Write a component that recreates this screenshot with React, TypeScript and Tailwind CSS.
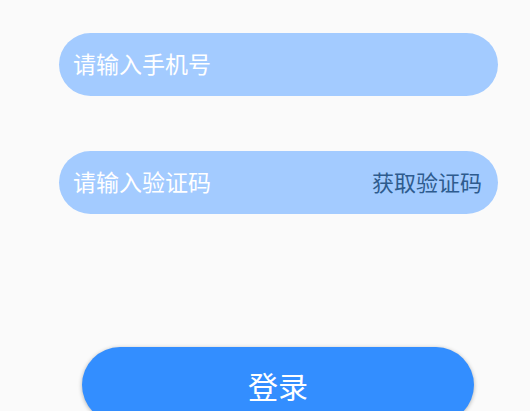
import { FC } from "react";

const font = "font-['Noto_Sans_CJK_SC','Noto_Sans',sans-serif]";

const App: FC = () => {
  return (
    <div className={`h-[411px] w-full overflow-hidden bg-[#fafafa] ${font}`}>
      <div className="flex flex-col pt-[33px]">
        <div className="ml-[59px] flex h-[63px] w-[439px] items-center rounded-full bg-[#a3cbff] pb-[2px] pl-[14px] pr-[16px]">
          <span className="text-[23px] leading-none text-white">请输入手机号</span>
        </div>
        <div className="ml-[59px] mt-[55px] flex h-[63px] w-[439px] items-center justify-between rounded-full bg-[#a3cbff] pb-[3px] pl-[14px] pr-[16px]">
          <span className="text-[23px] leading-none text-white">请输入验证码</span>
          <span className="text-[22px] leading-none text-[#2e5b8e]">获取验证码</span>
        </div>
        <button className="ml-[82px] mt-[133px] flex h-[76px] w-[392px] shrink-0 items-center justify-center rounded-full bg-[#338eff] shadow-[0_1px_4px_rgba(0,0,0,0.3)]">
          <span className="text-[30px] leading-none text-white">登录</span>
        </button>
      </div>
    </div>
  );
};

export default App;
